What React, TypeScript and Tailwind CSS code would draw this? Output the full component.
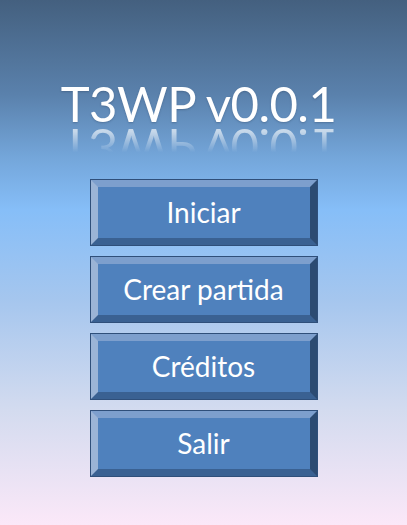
import React from 'react';

const items = ['Iniciar', 'Crear partida', 'Créditos', 'Salir'];

const MenuButton: React.FC<{ label: string }> = ({ label }) => (
    <button className="w-[228px] h-[67px] border border-[#2f4f7a] bg-[#2f4f7a]">
        <div className="w-full h-full flex items-center justify-center border-[7px] border-t-[#7d9fcd] border-l-[#9bb4d6] border-r-[#2c4b72] border-b-[#3a6192] bg-[#4f81bd]">
            <span className="text-white text-[28px] leading-none pb-[2px]">{label}</span>
        </div>
    </button>
);

export default function App() {
    return (
        <div
            className="w-[407px] h-[525px] flex flex-col items-center bg-[linear-gradient(180deg,#44607f_0%,#5a81ac_18%,#74a6da_30%,#86bef8_40%,#a5c6ee_57%,#d3dbef_78%,#fbe8f8_100%)]"
            style={{ fontFamily: 'Lato, "Open Sans", sans-serif' }}
        >
            <div className="mt-[82px] h-[97px] w-full flex justify-center">
                <div className="pr-[10px]">
                    <div className="text-white text-[49px] leading-[42px] tracking-[-0.5px] [text-shadow:0_1px_2px_rgba(40,60,90,0.35)]">
                        T3WP v0.0.1
                    </div>
                    {/* reflection */}
                    <div
                        aria-hidden="true"
                        className="mt-[3px] text-white text-[49px] leading-[42px] tracking-[-0.5px] opacity-70 [transform:scaleY(-1)] [mask-image:linear-gradient(to_top,rgba(0,0,0,0.9)_10%,rgba(0,0,0,0)_60%)]"
                    >
                        T3WP v0.0.1
                    </div>
                </div>
            </div>
            <div className="flex flex-col gap-[10px]">
                {items.map((label) => (
                    <MenuButton key={label} label={label} />
                ))}
            </div>
        </div>
    );
}
